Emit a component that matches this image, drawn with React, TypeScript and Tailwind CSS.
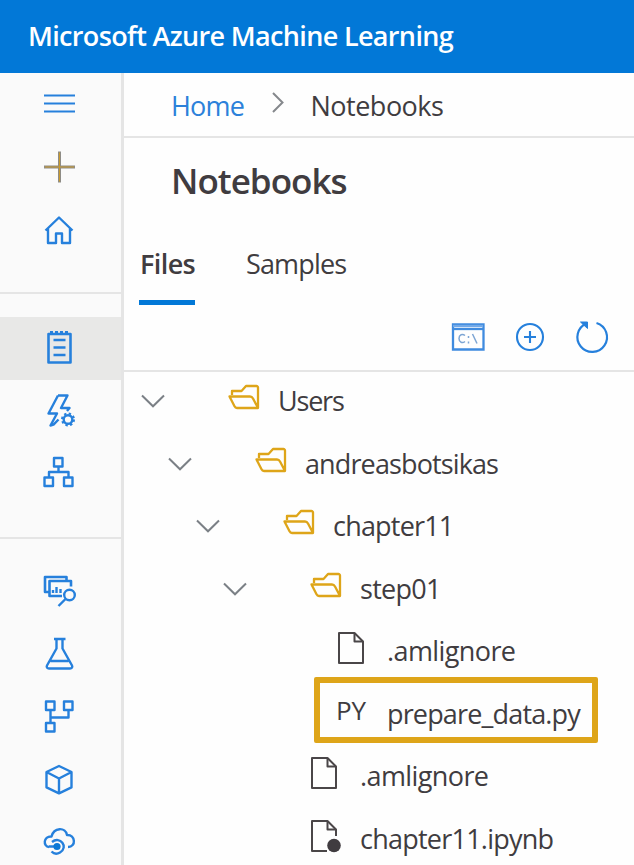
import type { ReactNode } from "react";

function NavItem({ children, active = false }: { children: ReactNode; active?: boolean }) {
  return (
    <button
      className={
        "flex h-[62.5px] w-full shrink-0 items-center justify-center " + (active ? "bg-[#e8e8e7]" : "")
      }
    >
      <svg
        viewBox="0 0 48 48"
        className="h-12 w-12 -translate-x-[2px] -translate-y-[0.5px]"
        fill="none"
        stroke="#2680dc"
        strokeWidth="2.4"
        strokeLinejoin="round"
      >
        {children}
      </svg>
    </button>
  );
}

function Chevron() {
  return (
    <svg viewBox="0 0 24 14" className="h-3.5 w-6 shrink-0" fill="none" stroke="#7b8086" strokeWidth="2">
      <path d="M1 1.5 12 12.300 23 1.500" />
    </svg>
  );
}

function Folder() {
  return (
    <svg
      viewBox="0 0 34 28"
      className="h-7 w-[34px] shrink-0 -translate-y-[3.5px]"
      fill="none"
      stroke="#dea519"
      strokeWidth="2.3"
      strokeLinejoin="round"
    >
      <path d="M5 11.500V7.500h9.500l4.500-5h10.500a1.500 1.500 0 0 1 1.500 1.500V24.500L26 15C25.300 13.600 24.500 13 23 13H2.500l5 9.800c.6 1.200 1.200 1.700 2.500 1.700h21" />
    </svg>
  );
}

function FileIcon({ dot = false }: { dot?: boolean }) {
  return (
    <svg
      viewBox="0 0 34 36"
      className="h-9 w-[34px] shrink-0 -translate-y-[3px]"
      fill="none"
      stroke="#4a4648"
      strokeWidth="2"
      strokeLinejoin="round"
    >
      {dot ? (
        <>
          <path d="M18 33H3V3h15.500L27 11.500V18" />
          <circle cx="25" cy="27.500" r="6.800" fill="#403c40" stroke="none" />
        </>
      ) : (
        <path d="M3 3h15.500L27 11.500V33H3z" />
      )}
      <path d="M18.500 3v8.500H27" />
    </svg>
  );
}

type Row = {
  name: string;
  kind: "folder" | "file" | "notebook" | "python";
  indent: string;
  tracking: string;
};

const rows: Row[] = [
  { name: "Users", kind: "folder", indent: "pl-[17px]", tracking: "tracking-[-1.2px]" },
  { name: "andreasbotsikas", kind: "folder", indent: "pl-[44px]", tracking: "tracking-[-0.88px]" },
  { name: "chapter11", kind: "folder", indent: "pl-[72px]", tracking: "tracking-[-0.8px]" },
  { name: "step01", kind: "folder", indent: "pl-[99px]", tracking: "tracking-[-0.7px]" },
  { name: ".amlignore", kind: "file", indent: "pl-[212px]", tracking: "tracking-[-0.6px]" },
  { name: "prepare_data.py", kind: "python", indent: "pl-[212px]", tracking: "tracking-[-0.84px]" },
  { name: ".amlignore", kind: "file", indent: "pl-[185px]", tracking: "tracking-[-0.6px]" },
  { name: "chapter11.ipynb", kind: "notebook", indent: "pl-[185px]", tracking: "tracking-[-0.76px]" },
];

function TreeRow({ row }: { row: Row }) {
  return (
    <li className={"relative flex h-[62.5px] shrink-0 items-center " + row.indent}>
      {row.kind === "python" && (
        <span className="absolute top-[-5.5px] left-[190px] h-[66px] w-[284px] rounded-[2px] border-[6px] border-[#dea519]" />
      )}
      {row.kind === "folder" && (
        <>
          <Chevron />
          <span className="w-[62px] shrink-0" />
          <Folder />
        </>
      )}
      {(row.kind === "file" || row.kind === "notebook") && <FileIcon dot={row.kind === "notebook"} />}
      {row.kind === "python" && (
        <span className="w-[34px] shrink-0 -translate-y-[3px] text-[26px] tracking-[-0.2px]">PY</span>
      )}
      <span className={"pl-[17px] text-[27px] whitespace-nowrap " + row.tracking}>{row.name}</span>
    </li>
  );
}

export default function App() {
  return (
    <div className="flex h-[865px] w-[634px] flex-col overflow-hidden bg-[#fefefe] font-['Open_Sans','Noto_Sans',sans-serif] text-[#403c40]">
      <header className="flex h-[73px] shrink-0 items-center bg-[#0278d7] pl-[28px]">
        <span className="text-[27px] font-semibold tracking-[-0.65px] whitespace-nowrap text-white">
          Microsoft Azure Machine Learning
        </span>
      </header>
      <div className="flex min-h-0 flex-1">
        <nav className="flex w-[124px] shrink-0 flex-col overflow-hidden border-r-[3px] border-[#e5e5e5] bg-[#fafafa]">
          <NavItem>
            <path d="M9 16h31M9 24h31M9 32h31" strokeWidth="2.100" />
          </NavItem>
          <NavItem>
            <path d="M9 24.500h31M24.500 9v31" stroke="#8e8c86" strokeWidth="3" />
            <path d="M10 24.500h29M24.500 10v29" stroke="#c99a2e" strokeWidth="1" />
          </NavItem>
          <NavItem>
            <path d="M10.500 26 24 13l13.500 13M13 24v14.500h8V29h6v9.500h8V24" />
          </NavItem>
          <div className="flex h-[56.5px] shrink-0 flex-col justify-center pt-2">
            <div className="h-0.5 bg-[#e5e5e5]" />
          </div>
          <NavItem active>
            <path d="M13.500 10.500h22V39h-22z" strokeWidth="2.600" />
            <path d="M15 9h19" strokeDasharray="3 2" strokeWidth="3" />
            <path d="M18.500 16.500h12M18.500 24h12M18.500 31.500h12" />
          </NavItem>
          <NavItem>
            <path d="M23 9h9.500L26 21.500h8.500L32 24.500M23 9l-9.500 18H22l-6.500 12 3-.8 5-5.200" />
            <circle cx="33" cy="33" r="4.300" />
            <circle cx="33" cy="33" r="6" strokeDasharray="2.350 2.360" strokeWidth="2" />
          </NavItem>
          <NavItem>
            <path d="M19 9.500h8.500V18H19zM9.500 29H18v8.500H9.500zM29 29h8.500v8.500H29zM23.500 18v5.500M14 29v-5.500h19.500V29" />
          </NavItem>
          <div className="flex h-[55.5px] shrink-0 flex-col justify-center pt-[11px]">
            <div className="h-0.5 bg-[#e5e5e5]" />
          </div>
          <NavItem>
            <path d="M14.500 25.500H10V10.500h21.500v4M27 29.500H14.500v-15H36V20" strokeWidth="2.600" />
            <path d="M18 26.500v-3M21.500 26.500v-6M25.500 26.500v-4" />
            <circle cx="34.500" cy="28.500" r="5.300" />
            <path d="m30.500 32.500-7 7" />
          </NavItem>
          <NavItem>
            <path d="M19 9.500h11.500M21.500 9.500V19L12 36c-.8 1.700.2 3 2 3h21c1.800 0 2.800-1.300 2-3L27.500 19V9.500M15.500 31.500h18" />
          </NavItem>
          <NavItem>
            <path d="M11 10h8.500v8.500H11zM29 10h8.500v8.500H29zM11 31.500h8.500V40H11zM15.500 18.500v13M15.500 26h18v-7.500" />
          </NavItem>
          <NavItem>
            <path d="m24 11.500 12.500 6v15.300L24 38.800l-12.500-6V17.500zM11.500 17.500 24 24l12.500-6.500M24 24v14.500" />
          </NavItem>
          <NavItem>
            <path d="M14 30.500c-6-.3-6-11 2.500-10.500 2.500-9.500 14-9.500 15.500-1.500 8.500-.5 9.500 12 1 12M17 25.500c8-6.500 17 5 8 10.500-2.500 1.500-6 1.500-8.500-1M14 30h8" />
            <circle cx="22" cy="30" r="3.600" fill="#0b78d6" stroke="none" />
          </NavItem>
        </nav>
        <main className="flex min-w-0 flex-1 flex-col">
          <div className="flex h-[64.5px] shrink-0 items-center border-b-2 border-[#e5e5e5] pt-[3px] pl-[47px] text-[27px] tracking-[-0.5px]">
            <a className="w-[100px] tracking-[-0.8px] text-[#2c81da]">Home</a>
            <svg viewBox="0 0 14 22" className="h-[22px] w-3.5 -translate-y-[3.5px]" fill="none" stroke="#85888c" strokeWidth="2">
              <path d="m2 1.500 9.500 9.500L2 20.500" />
            </svg>
            <span className="pl-[25.5px]">Notebooks</span>
          </div>
          <h1 className="flex h-[89px] shrink-0 items-center pb-[2px] pl-[47px] text-[35px] font-semibold tracking-[-0.98px]">
            Notebooks
          </h1>
          <div className="flex h-[78px] shrink-0 items-start pl-[15px] text-[27px] leading-[74px] tracking-[-0.6px]">
            <span className="flex h-[78px] w-[56px] flex-col border-b-[5px] border-[#0278d7] pl-px font-semibold">
              Files
            </span>
            <span className="pl-[51px] tracking-[-0.85px]">Samples</span>
          </div>
          <div className="flex h-[67.5px] shrink-0 items-center justify-end border-b-2 border-[#e5e5e5] pr-[24px]">
            <svg viewBox="0 0 36 36" className="mr-[27px] h-9 w-9" fill="none" stroke="#3f8bdf" strokeWidth="2.300">
              <path d="M3 5.500h30.500v25H3z" />
              <path d="M3 10h30.500" />
              <path d="M3 7h30" stroke="#72a9e8" />
              <path d="M15 16.500c-2.500-2-6-1-6 3s3.500 5 6 3M18.500 17v2M18.500 22.500v2M22.500 15l4.500 9.500" strokeWidth="1.500" stroke="#7da5d4" />
            </svg>
            <svg viewBox="0 0 36 36" className="mr-[25.5px] h-9 w-9" fill="none" stroke="#2680dc" strokeWidth="2.100">
              <circle cx="17" cy="18" r="13" />
              <path d="M17 12v12M11 18h12" />
            </svg>
            <svg viewBox="0 0 36 36" className="h-9 w-9" fill="none" stroke="#2680dc" strokeWidth="2.200">
              <path d="M22.500 4A14.800 14.800 0 1 1 12.500 4.500" />
              <path d="M6.500 3h7v6.500z" fill="#2680dc" strokeWidth="1" />
            </svg>
          </div>
          <ul className="-mt-[2px] flex flex-col">
            {rows.map((row, i) => (
              <TreeRow key={i} row={row} />
            ))}
          </ul>
        </main>
      </div>
    </div>
  );
}
